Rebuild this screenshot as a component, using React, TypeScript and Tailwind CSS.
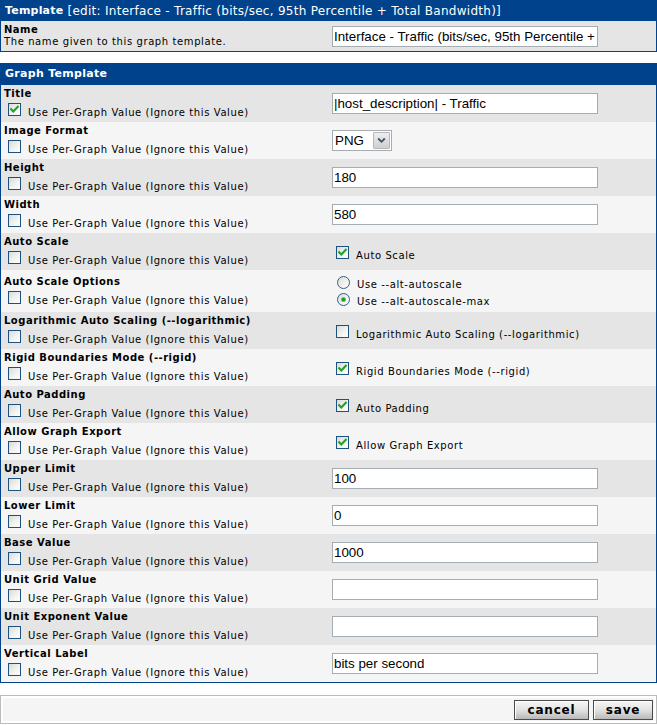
import React from "react";

type Right =
  | { type: "text"; value: string }
  | { type: "select"; value: string }
  | { type: "check"; checked: boolean; label: string }
  | { type: "radios" };

interface Row {
  label: string;
  checked?: boolean;
  right: Right;
}

const rows: Row[] = [
  { label: "Title", checked: true, right: { type: "text", value: "|host_description| - Traffic" } },
  { label: "Image Format", right: { type: "select", value: "PNG" } },
  { label: "Height", right: { type: "text", value: "180" } },
  { label: "Width", right: { type: "text", value: "580" } },
  { label: "Auto Scale", right: { type: "check", checked: true, label: "Auto Scale" } },
  { label: "Auto Scale Options", right: { type: "radios" } },
  {
    label: "Logarithmic Auto Scaling (--logarithmic)",
    right: { type: "check", checked: false, label: "Logarithmic Auto Scaling (--logarithmic)" },
  },
  {
    label: "Rigid Boundaries Mode (--rigid)",
    right: { type: "check", checked: true, label: "Rigid Boundaries Mode (--rigid)" },
  },
  { label: "Auto Padding", right: { type: "check", checked: true, label: "Auto Padding" } },
  { label: "Allow Graph Export", right: { type: "check", checked: true, label: "Allow Graph Export" } },
  { label: "Upper Limit", right: { type: "text", value: "100" } },
  { label: "Lower Limit", right: { type: "text", value: "0" } },
  { label: "Base Value", right: { type: "text", value: "1000" } },
  { label: "Unit Grid Value", right: { type: "text", value: "" } },
  { label: "Unit Exponent Value", right: { type: "text", value: "" } },
  { label: "Vertical Label", right: { type: "text", value: "bits per second" } },
];

function CheckBox({ checked }: { checked: boolean }) {
  return (
    <svg width="13" height="13" viewBox="0 0 13 13" className="block shrink-0">
      <defs>
        <linearGradient id="cbgrad" x1="0" y1="0" x2="1" y2="1">
          <stop offset="0" stopColor="#d8d8d2" />
          <stop offset="0.6" stopColor="#f4f4f2" />
          <stop offset="1" stopColor="#ffffff" />
        </linearGradient>
      </defs>
      <rect x="0.5" y="0.5" width="12" height="12" fill="url(#cbgrad)" stroke="#1c5180" />
      {checked && (
        <path d="M3.2 6.2 L5.3 8.4 L9.8 3.8" stroke="#21a121" strokeWidth="2.1" fill="none" strokeLinecap="square" />
      )}
    </svg>
  );
}

function Radio({ checked }: { checked: boolean }) {
  return (
    <svg width="13" height="13" viewBox="0 0 13 13" className="block shrink-0">
      <defs>
        <linearGradient id="rdgrad" x1="0" y1="0" x2="1" y2="1">
          <stop offset="0" stopColor="#d8d8d2" />
          <stop offset="0.6" stopColor="#f4f4f2" />
          <stop offset="1" stopColor="#ffffff" />
        </linearGradient>
      </defs>
      <circle cx="6.5" cy="6.5" r="6" fill="url(#rdgrad)" stroke="#2c628b" />
      {checked && (
        <>
          <circle cx="6.5" cy="6.5" r="2.6" fill="#6fcf6f" />
          <circle cx="6.5" cy="6.5" r="1.7" fill="#1f9a1f" />
        </>
      )}
    </svg>
  );
}

function TextInput({ value }: { value: string }) {
  return (
    <input
      type="text"
      readOnly
      defaultValue={value}
      className="block h-[21px] w-[266px] border border-[#a5acb2] bg-white px-[1px] font-['Liberation_Sans',Arial,sans-serif] text-[13.33px] text-black outline-none"
    />
  );
}

function SelectBox({ value }: { value: string }) {
  return (
    <div className="flex h-[21px] w-[60px] items-center justify-between border border-[#a5acb2] bg-white pl-[2px] pr-[1px]">
      <span className="font-['Liberation_Sans',Arial,sans-serif] text-[13.33px] leading-none text-black">{value}</span>
      <div className="flex h-[17px] w-[17px] items-center justify-center rounded-[1px] border border-[#b8b8b8] bg-gradient-to-b from-[#eeeeee] to-[#cfcfcf]">
        <svg width="9" height="7" viewBox="0 0 9 7">
          <path d="M1.2 1.5 L4.5 4.8 L7.8 1.5" stroke="#3d4f6e" strokeWidth="1.8" fill="none" />
        </svg>
      </div>
    </div>
  );
}

const small = "text-[10px] leading-[12px] tracking-[0.6px] text-black";

function RightCell({ right }: { right: Right }) {
  if (right.type === "text") return <TextInput value={right.value} />;
  if (right.type === "select") return <SelectBox value={right.value} />;
  if (right.type === "check")
    return (
      <div className="flex h-[19px] items-start">
        <div className="ml-[4px] mr-[3px] mt-[4px]">
          <CheckBox checked={right.checked} />
        </div>
        <span className={`mt-[8px] pl-[4px] ${small}`}>{right.label}</span>
      </div>
    );
  return (
    <div className="flex flex-col">
      <div className="flex h-[17px] items-start">
        <div className="ml-[5px] mr-[3px] mt-[3px]">
          <Radio checked={false} />
        </div>
        <span className={`mt-[6px] pl-[4px] ${small}`}>Use --alt-autoscale</span>
      </div>
      <div className="flex h-[19px] items-start">
        <div className="ml-[5px] mr-[3px] mt-[3px]">
          <Radio checked={true} />
        </div>
        <span className={`mt-[6px] pl-[4px] ${small}`}>Use --alt-autoscale-max</span>
      </div>
    </div>
  );
}

export default function App() {
  return (
    <div className="w-[657px] bg-white font-['DejaVu_Sans',Verdana,sans-serif] text-black">
      {/* Template table */}
      <div className="border border-[#00438c]">
        <div className="flex h-[20px] items-center bg-[#00438c] px-[4px] text-white">
          <span className="text-[11px] font-bold tracking-[0.2px]">Template</span>
          <span className="whitespace-pre text-[12px] tracking-[0.28px]"> [edit: Interface - Traffic (bits/sec, 95th Percentile + Total Bandwidth)]</span>
        </div>
        <div className="flex bg-[#e5e5e5]">
          <div className="flex w-[328px] flex-col justify-center p-[3px]">
            <div className="text-[10px] font-bold leading-[12px] tracking-[0.5px]">Name</div>
            <div className={small}>The name given to this graph template.</div>
          </div>
          <div className="flex flex-1 items-center p-[3px]">
            <TextInput value="Interface - Traffic (bits/sec, 95th Percentile + Total Bandwidth)" />
          </div>
        </div>
      </div>

      {/* Graph Template table */}
      <div className="mt-[11px] border border-[#00438c]">
        <div className="flex h-[21px] items-center bg-[#00438c] px-[4px] text-[11px] font-bold tracking-[0.3px] text-white">
          Graph Template
        </div>
        {rows.map((r, i) => (
          <div key={r.label} className={`flex ${i % 2 === 0 ? "bg-[#e5e5e5]" : "bg-[#f5f5f5]"}`}>
            <div className="flex w-[328px] flex-col justify-center p-[3px]">
              <div className="text-[10px] font-bold leading-[12px] tracking-[0.5px]">{r.label}</div>
              <div className="flex h-[19px] items-start">
                <div className="ml-[4px] mr-[3px] mt-[3px]">
                  <CheckBox checked={!!r.checked} />
                </div>
                <span className={`mt-[7px] pl-[4px] ${small}`}>Use Per-Graph Value (Ignore this Value)</span>
              </div>
            </div>
            <div className="flex flex-1 items-center p-[3px]">
              <RightCell right={r.right} />
            </div>
          </div>
        ))}
      </div>

      {/* Buttons */}
      <div className="mt-[12px] border border-[#bbbbbb] bg-white p-[2px]">
        <div className="flex h-[23px] items-center justify-end gap-[4px] bg-[#f5f5f5] pr-[1px]">
          <div className="flex h-[20px] w-[75px] items-center justify-center border border-[#4a4a4a] bg-gradient-to-b from-[#f6f6f6] via-[#e2e2e2] to-[#b9b9b9] text-[12px] font-bold tracking-[0.8px] shadow-[inset_1px_1px_0_#ffffff]">
            cancel
          </div>
          <div className="flex h-[20px] w-[60px] items-center justify-center border border-[#4a4a4a] bg-gradient-to-b from-[#f6f6f6] via-[#e2e2e2] to-[#b9b9b9] text-[12px] font-bold tracking-[0.8px] shadow-[inset_1px_1px_0_#ffffff]">
            save
          </div>
        </div>
      </div>
    </div>
  );
}
